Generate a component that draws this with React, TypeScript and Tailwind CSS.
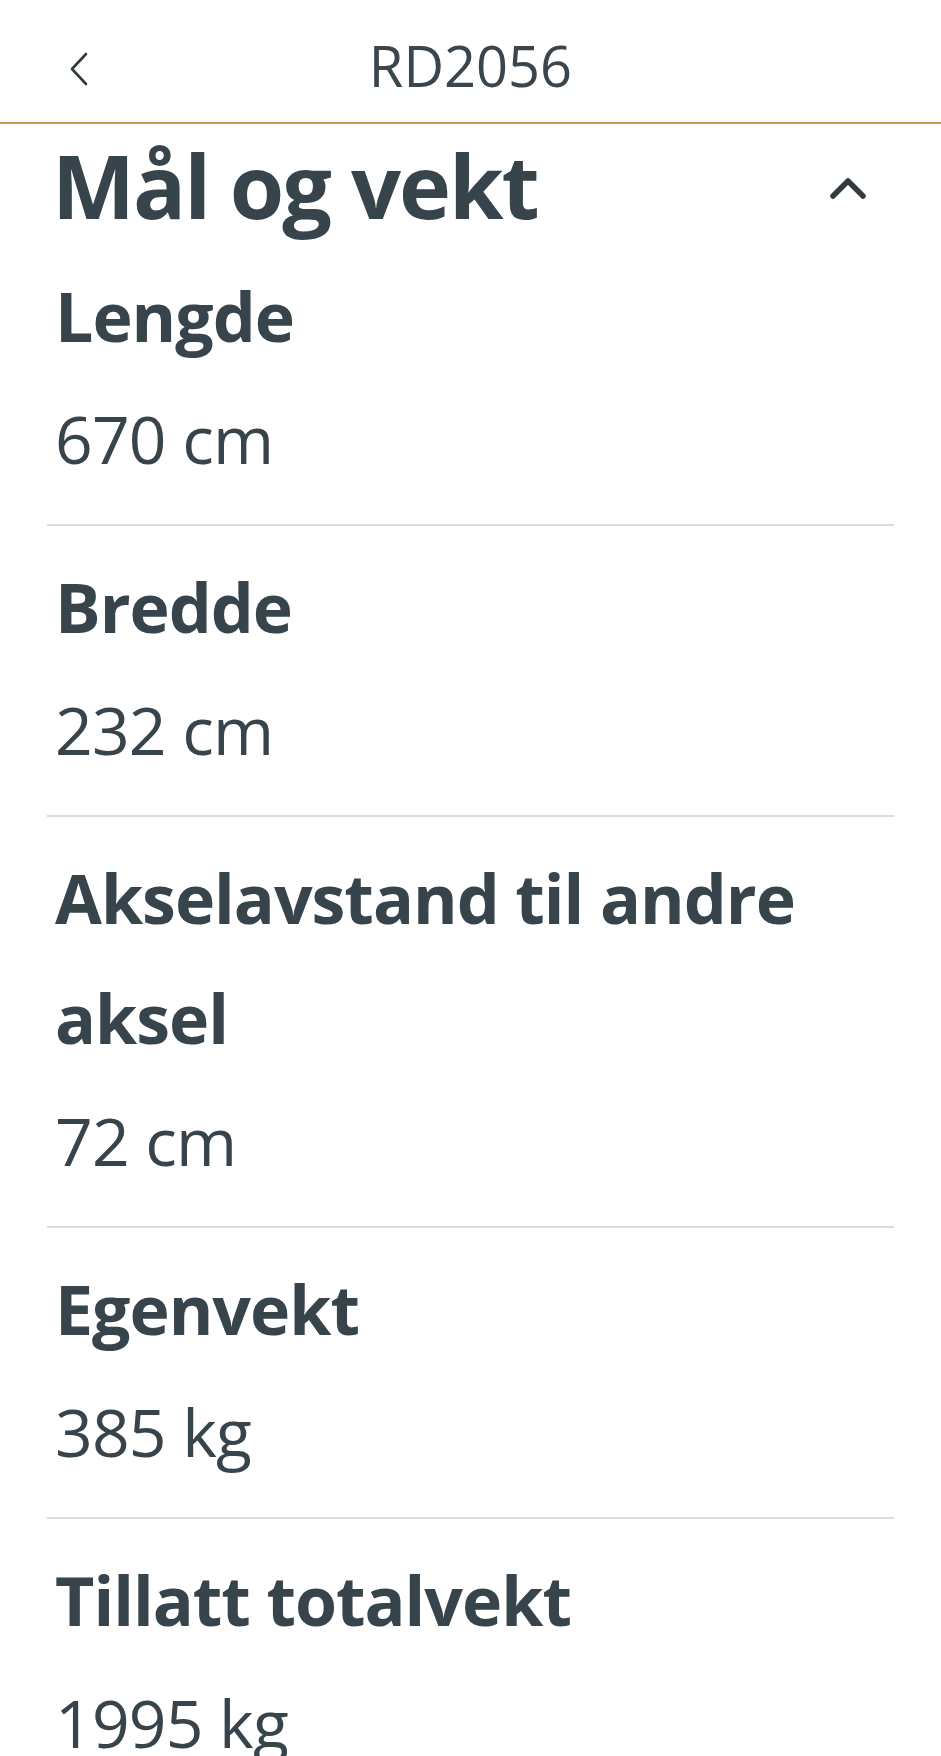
import React from "react";

const specs: { label: string; value: string }[] = [
  { label: "Lengde", value: "670 cm" },
  { label: "Bredde", value: "232 cm" },
  { label: "Akselavstand til andre aksel", value: "72 cm" },
  { label: "Egenvekt", value: "385 kg" },
  { label: "Tillatt totalvekt", value: "1995 kg" },
];

const SpecRow: React.FC<{ label: string; value: string; last: boolean }> = ({ label, value, last }) => (
  <div className={last ? "pl-[8px] pt-[21px] pb-[26px]" : "pl-[8px] pt-[21px] pb-[26px] border-b-2 border-[#dcdcdc]"}>
    <div className="text-[68px] leading-[120px] font-bold tracking-[-1px] text-[#38444c]">{label}</div>
    <div className="mt-[2px] text-[66px] leading-[120px] tracking-[-0.8px] text-[#38444c]">{value}</div>
  </div>
);

export default function App() {
  return (
    <div className="min-h-screen bg-white" style={{ fontFamily: '"Open Sans", "Noto Sans", sans-serif' }}>
      <header className="grid grid-cols-[1fr_auto_1fr] items-start h-[124px] pt-[27px] border-b-2 border-[#cc9658]">
        <button className="mt-[24px] ml-[67px] w-[24px] h-[36px]">
          <svg width="24" height="36" viewBox="0 0 24 36" fill="none">
            <path d="M19 3 L5 18 L19 33" stroke="#2f3a41" strokeWidth="2.6" strokeLinecap="round" strokeLinejoin="round" />
          </svg>
        </button>
        <h1 className="text-[56px] leading-[76px] text-[#3a464e]">RD2056</h1>
        <div />
      </header>

      <main className="px-[47px]">
        <div className="mt-[11px] flex items-center justify-between h-[100px] pl-[5px]">
          <h2 className="text-[88px] leading-[100px] font-bold tracking-[-2px] text-[#38444c]">Mål og vekt</h2>
          <svg className="mr-[26px] mt-[6px]" width="40" height="26" viewBox="0 0 40 26" fill="none">
            <path d="M5 21 L20 6 L35 21" stroke="#2f3a41" strokeWidth="5.5" strokeLinecap="round" strokeLinejoin="round" />
          </svg>
        </div>

        {specs.map((s, i) => (
          <SpecRow key={s.label} label={s.label} value={s.value} last={i === specs.length - 1} />
        ))}
      </main>
    </div>
  );
}
